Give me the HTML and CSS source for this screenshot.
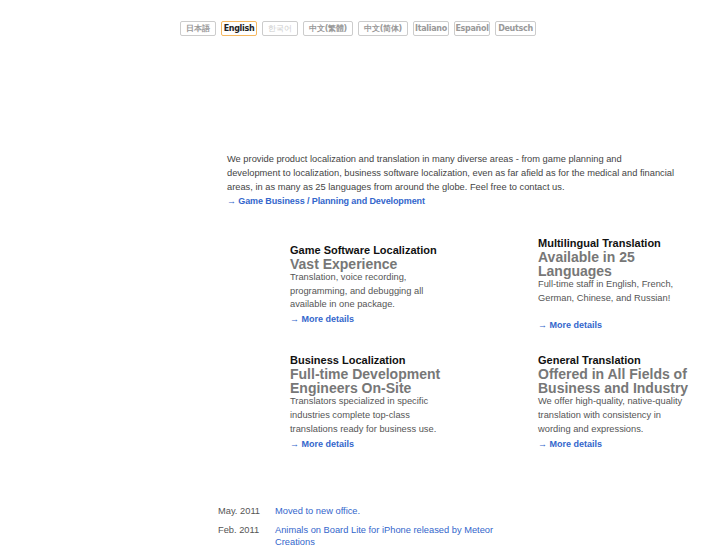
FILE: index.html
```html
<!DOCTYPE html>
<html>
<head>
<meta charset="utf-8">
<link rel="stylesheet" href="styles.css">
</head>
<body>
<div class="lang">
  <span class="lb w36">日本語</span>
  <span class="lb w36 on">English</span>
  <span class="lb w36 dim">한국어</span>
  <span class="lb w50">中文(繁體)</span>
  <span class="lb w50">中文(简体)</span>
  <span class="lb w36">Italiano</span>
  <span class="lb w36">Español</span>
  <span class="lb w41">Deutsch</span>
</div>
<div class="intro">
  <p>We provide product localization and translation in many diverse areas - from game planning and<br>development to localization, business software localization, even as far afield as for the medical and financial<br>areas, in as many as 25 languages from around the globe. Feel free to contact us.</p>
  <a class="more" href="#">→ Game Business / Planning and Development</a>
</div>
<div class="cards">
  <div class="card first">
    <h3>Game Software Localization</h3>
    <h4>Vast Experience</h4>
    <p>Translation, voice recording, programming, and debugging all available in one package.</p>
    <a class="more" href="#">→ More details</a>
  </div>
  <div class="card">
    <h3>Multilingual Translation</h3>
    <h4>Available in 25 Languages</h4>
    <p>Full-time staff in English, French, German, Chinese, and Russian!</p>
    <a class="more gap" href="#">→ More details</a>
  </div>
  <div class="card">
    <h3>Business Localization</h3>
    <h4>Full-time Development Engineers On-Site</h4>
    <p>Translators specialized in specific industries complete top-class translations ready for business use.</p>
    <a class="more" href="#">→ More details</a>
  </div>
  <div class="card">
    <h3>General Translation</h3>
    <h4>Offered in All Fields of Business and Industry</h4>
    <p>We offer high-quality, native-quality translation with consistency in wording and expressions.</p>
    <a class="more" href="#">→ More details</a>
  </div>
</div>
<div class="news">
  <div class="row"><span class="date">May. 2011</span><a href="#">Moved to new office.</a></div>
  <div class="row"><span class="date">Feb. 2011</span><a href="#">Animals on Board Lite for iPhone released by Meteor Creations</a></div>
</div>
</body>
</html>
```
FILE: styles.css
```css
html, body { margin: 0; padding: 0; background: #fff; }
body { font-family: "Liberation Sans", Arial, sans-serif; color: #444; font-size: 9px; }
.lang { display: flex; gap: 5px; padding: 21px 0 0 180px; height: 15px; }
.lb { box-sizing: border-box; border: 1px solid #ccc; border-radius: 2px; font-family: "DejaVu Sans", sans-serif; font-size: 8px; font-weight: bold; color: #999; height: 15px; line-height: 13px; text-align: center; letter-spacing: -0.3px; white-space: nowrap; overflow: hidden; }
.w36 { width: 36px; }
.w41 { width: 41px; }
.w50 { width: 50px; }
.lb.on { border-color: #f5b860; color: #222; }
.lb.dim { color: #ccc; font-weight: normal; }
.intro { margin: 116px 0 0 227px; width: 480px; }
.intro p { margin: 0; line-height: 14px; color: #444; font-size: 9.3px; }
a.more { color: #3366cc; font-weight: bold; text-decoration: none; line-height: 14px; display: block; }
.intro a.more { font-size: 9px; letter-spacing: -0.1px; }
.cards { display: grid; grid-template-columns: 248px 160px; margin: 29px 0 0 290px; row-gap: 22px; }
.card { width: 160px; }
.card h3 { margin: 0; font-size: 11px; color: #111; line-height: 13px; }
.card h4 { margin: 0; font-size: 14px; color: #777; line-height: 14px; }
.card p { margin: 0; line-height: 13.7px; color: #555; width: 155px; font-size: 9.3px; }
.first { padding-top: 7px; }
.card a.gap { margin-top: 13px; }
.news { margin: 54px 0 0 218px; width: 290px; }
.row { display: flex; line-height: 12px; margin-bottom: 7px; font-size: 9.3px; }
.date { width: 57px; flex: none; color: #555; }
.row a { color: #3366cc; text-decoration: none; }
```
